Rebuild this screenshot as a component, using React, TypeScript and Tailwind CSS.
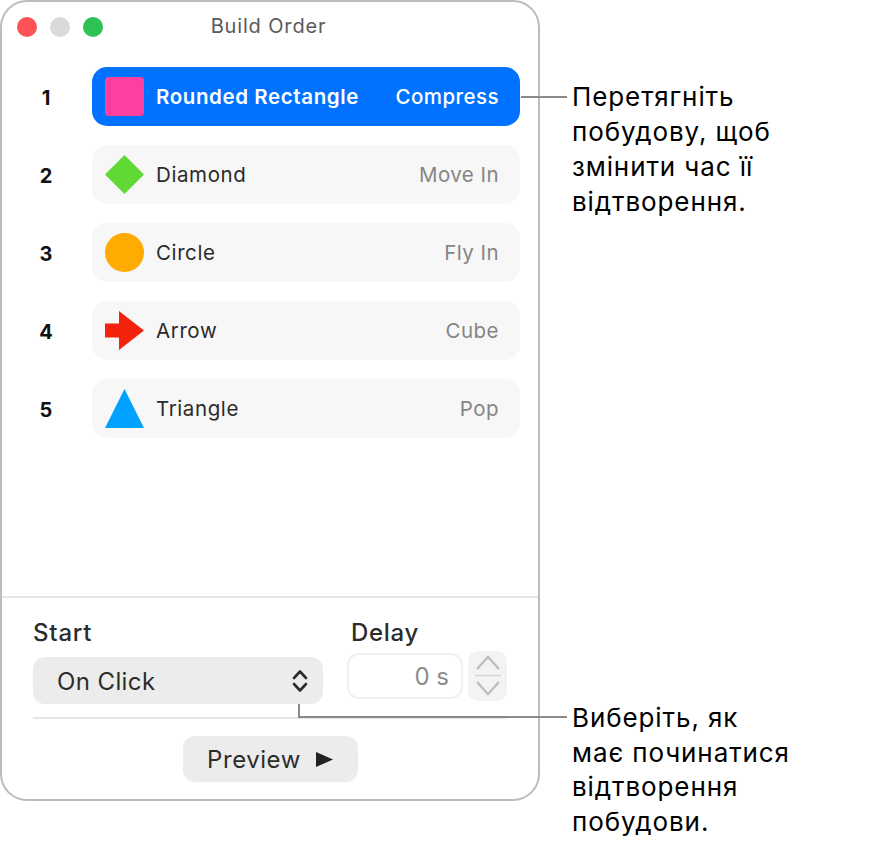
import React from "react";

const SF = "font-['Inter','Liberation_Sans',sans-serif]";

const Shape = ({ kind }: { kind: string }) => {
  if (kind === "rect") {
    return <div className="h-[39px] w-[39px] rounded-[4px] bg-[#ff3f9f]" />;
  }
  const shapes: Record<string, React.ReactNode> = {
    diamond: <polygon points="19.5,0 39,19.5 19.5,39 0,19.5" fill="#60d937" />,
    circle: <circle cx="19.5" cy="19.5" r="19.5" fill="#ffab01" />,
    arrow: <polygon points="14,0 39,19.5 14,39 14,26.5 0,26.5 0,12.5 14,12.5" fill="#f4230d" />,
    triangle: <polygon points="19.5,0 39,39 0,39" fill="#00a1ff" />,
  };
  return (
    <svg width="39" height="39" viewBox="0 0 39 39">
      {shapes[kind]}
    </svg>
  );
};

const BUILDS = [
  { shape: "rect", name: "Rounded Rectangle", effect: "Compress" },
  { shape: "diamond", name: "Diamond", effect: "Move In" },
  { shape: "circle", name: "Circle", effect: "Fly In" },
  { shape: "arrow", name: "Arrow", effect: "Cube" },
  { shape: "triangle", name: "Triangle", effect: "Pop" },
];

const BuildRow = ({ index, build }: { index: number; build: (typeof BUILDS)[number] }) => {
  const selected = index === 0;
  return (
    <div className="flex items-center">
      <div className="w-[88px] pt-[2px] text-center text-[20px] font-bold text-[#111]">{index + 1}</div>
      <div
        className={
          selected
            ? "ml-[2px] flex h-[59px] w-[428px] items-center rounded-[15px] bg-[#0072ff] pl-[13px] pr-[21px] text-white"
            : "ml-[2px] flex h-[59px] w-[428px] items-center rounded-[15px] bg-[#f7f7f7] pl-[13px] pr-[21px] text-[#2b2b2b]"
        }
      >
        <Shape kind={build.shape} />
        <span
          className={
            selected
              ? "ml-[12px] pt-[2px] text-[20.5px] font-semibold tracking-[0.6px]"
              : "ml-[12px] pt-[2px] text-[20.5px] tracking-[0.6px]"
          }
        >
          {build.name}
        </span>
        <span
          className={
            selected
              ? "ml-auto pt-[2px] text-[20.5px] font-medium tracking-[0.45px]"
              : "ml-auto pt-[2px] text-[20.5px] tracking-[0.45px] text-[#858585]"
          }
        >
          {build.effect}
        </span>
      </div>
    </div>
  );
};

const Callout = ({ className, lines }: { className: string; lines: string[] }) => (
  <div className={className}>
    {lines.map((line) => (
      <div key={line}>{line}</div>
    ))}
  </div>
);

export default function App() {
  return (
    <div className={`relative h-[841px] w-[876px] overflow-hidden bg-white ${SF}`}>
      <div className="flex h-[801px] w-[540px] flex-col rounded-[27px] border-2 border-[#bcbcbc] bg-white">
        {/* title bar */}
        <div className="relative flex h-[65px] shrink-0 items-start pl-[15px] pt-[15px]">
          <div className="flex gap-[13px]">
            <div className="h-[20px] w-[20px] rounded-full bg-[#ff5257]" />
            <div className="h-[20px] w-[20px] rounded-full bg-[#dadada]" />
            <div className="h-[20px] w-[20px] rounded-full bg-[#2ec255]" />
          </div>
          <div className="absolute left-0 right-[3px] top-[10px] text-center text-[20px] leading-[28px] tracking-[0.85px] text-[#5a5a5a]">
            Build Order
          </div>
        </div>

        {/* builds */}
        <div className="flex flex-1 flex-col gap-[19px]">
          {BUILDS.map((build, i) => (
            <BuildRow key={build.name} index={i} build={build} />
          ))}
        </div>

        {/* inspector */}
        <div className="h-[203px] shrink-0 border-t-2 border-[#e6e6e6] px-[31px]">
          <div className="flex">
            <div className="w-[291px]">
              <div className="mt-[19px] text-[24px] font-medium leading-[32px] tracking-[0.8px] text-[#2c2c2c]">
                Start
              </div>
              <div className="mt-[8px] flex h-[47px] items-center justify-between rounded-[12px] bg-[#ececec] pl-[24px] pr-[15px]">
                <span className="pt-[2px] text-[24px] tracking-[0.4px] text-[#2c2c2c]">On Click</span>
                <svg width="16" height="26" viewBox="0 0 16 26" fill="none" stroke="#2c2c2c" strokeWidth="2.6" strokeLinecap="round" strokeLinejoin="round">
                  <path d="M2 10 L8 3.5 L14 10" />
                  <path d="M2 16 L8 22.5 L14 16" />
                </svg>
              </div>
            </div>
            <div className="ml-[24px]">
              <div className="ml-[4px] mt-[19px] text-[24px] font-medium leading-[32px] tracking-[0.7px] text-[#2c2c2c]">
                Delay
              </div>
              <div className="mt-[2px] flex items-center gap-[5px]">
                <div className="flex h-[46px] w-[116px] items-center justify-end rounded-[12px] border-2 border-[#f1f1f1] pr-[12px] pt-[2px] text-[24px] text-[#8c8c8c]">
                  0 s
                </div>
                <div className="flex h-[50px] w-[39px] flex-col items-center justify-center rounded-[10px] bg-[#f3f3f3]">
                  <svg width="26" height="44" viewBox="0 0 26 44" fill="none" stroke="#bdbdbd" strokeWidth="2.2">
                    <path d="M2 15 L13 3 L24 15" />
                    <path d="M0 21.5 H26" strokeWidth="1.5" stroke="#d6d6d6" />
                    <path d="M2 28 L13 40 L24 28" />
                  </svg>
                </div>
              </div>
            </div>
          </div>
          <div className="mt-[13px] h-[2px] w-[474px] bg-[#e6e6e6]" />
          <div className="mt-[17px] flex justify-center">
            <div className="flex h-[46px] w-[175px] items-center justify-center gap-[15px] rounded-[12px] bg-[#ececec]">
              <span className="pt-[2px] text-[24px] tracking-[0.55px] text-[#2c2c2c]">Preview</span>
              <svg width="17" height="15" viewBox="0 0 17 15">
                <polygon points="0,0 17,7.5 0,15" fill="#222" />
              </svg>
            </div>
          </div>
        </div>
      </div>

      {/* leader lines */}
      <div className="absolute left-[521px] top-[96px] h-[2px] w-[46px] bg-[#8a8a8a]" />
      <div className="absolute left-[298px] top-[704px] h-[14px] w-[2px] bg-[#8a8a8a]" />
      <div className="absolute left-[298px] top-[716px] h-[2px] w-[269px] bg-[#8a8a8a]" />

      {/* callouts */}
      <Callout
        className="absolute left-[572px] top-[79px] text-[26px] leading-[35px] tracking-[0.9px] text-black"
        lines={["Перетягніть", "побудову, щоб", "змінити час її", "відтворення."]}
      />
      <Callout
        className="absolute left-[572px] top-[701px] text-[26px] leading-[34.6px] tracking-[0.9px] text-black"
        lines={["Виберіть, як", "має починатися", "відтворення", "побудови."]}
      />
    </div>
  );
}
